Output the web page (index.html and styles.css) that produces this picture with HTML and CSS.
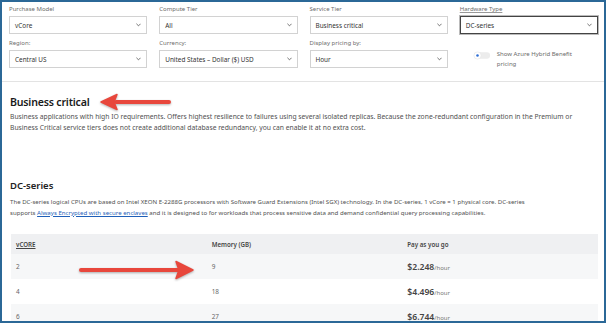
FILE: index.html
```html
<!DOCTYPE html>
<html lang="en">
<head>
    <meta charset="UTF-8">
    <meta name="viewport" content="width=device-width, initial-scale=1.0">
    <title>SQL Database Pricing</title>
    <link rel="stylesheet" href="styles.css">
</head>
<body>
    <div class="frame">
        <!-- Filters -->
        <div class="filters">
            <div class="field">
                <label>Purchase Model</label>
                <div class="select">vCore<svg viewBox="0 0 6 4"><path d="M0.5 0.5 L3 3 L5.5 0.5"/></svg></div>
            </div>
            <div class="field">
                <label>Compute Tier</label>
                <div class="select">All<svg viewBox="0 0 6 4"><path d="M0.5 0.5 L3 3 L5.5 0.5"/></svg></div>
            </div>
            <div class="field">
                <label>Service Tier</label>
                <div class="select">Business critical<svg viewBox="0 0 6 4"><path d="M0.5 0.5 L3 3 L5.5 0.5"/></svg></div>
            </div>
            <div class="field">
                <label class="focused">Hardware Type</label>
                <div class="select active">DC-series<svg viewBox="0 0 6 4"><path d="M0.5 0.5 L3 3 L5.5 0.5"/></svg></div>
            </div>
            <div class="field">
                <label>Region:</label>
                <div class="select">Central US<svg viewBox="0 0 6 4"><path d="M0.5 0.5 L3 3 L5.5 0.5"/></svg></div>
            </div>
            <div class="field">
                <label>Currency:</label>
                <div class="select">United States – Dollar ($) USD<svg viewBox="0 0 6 4"><path d="M0.5 0.5 L3 3 L5.5 0.5"/></svg></div>
            </div>
            <div class="field">
                <label>Display pricing by:</label>
                <div class="select">Hour<svg viewBox="0 0 6 4"><path d="M0.5 0.5 L3 3 L5.5 0.5"/></svg></div>
            </div>
            <div class="toggle-field">
                <svg class="toggle" viewBox="0 0 20 10">
                    <rect x="1" y="1.5" width="18" height="7" rx="3.5" fill="#ececec"/>
                    <circle cx="5" cy="5" r="4" fill="#fff" stroke="#e4e4e4" stroke-width="0.6"/>
                    <circle cx="5" cy="5" r="1.4" fill="#2f6fd6"/>
                </svg>
                <span>Show Azure Hybrid Benefit<br>pricing</span>
            </div>
        </div>

        <div class="divider"></div>

        <!-- Tier description -->
        <div class="section tier">
            <h2>Business critical</h2>
            <p>Business applications with high IO requirements. Offers highest resilience to failures using several isolated replicas. Because the zone-redundant configuration in the Premium or<br>Business Critical service tiers does not create additional database redundancy, you can enable it at no extra cost.</p>
        </div>

        <!-- Hardware description -->
        <div class="section hardware">
            <h3>DC-series</h3>
            <p>The DC-series logical CPUs are based on Intel XEON E-2288G processors with Software Guard Extensions (Intel SGX) technology. In the DC-series, 1 vCore = 1 physical core. DC-series<br>supports <a href="#">Always Encrypted with secure enclaves</a> and it is designed to for workloads that process sensitive data and demand confidential query processing capabilities.</p>

            <table class="pricing">
                <thead>
                    <tr>
                        <th><u>vCORE</u></th>
                        <th>Memory (GB)</th>
                        <th>Pay as you go</th>
                    </tr>
                </thead>
                <tbody>
                    <tr>
                        <td>2</td>
                        <td>9</td>
                        <td><span class="price">$2.248</span><span class="unit">/hour</span></td>
                    </tr>
                    <tr>
                        <td>4</td>
                        <td>18</td>
                        <td><span class="price">$4.496</span><span class="unit">/hour</span></td>
                    </tr>
                    <tr>
                        <td>6</td>
                        <td>27</td>
                        <td><span class="price">$6.744</span><span class="unit">/hour</span></td>
                    </tr>
                </tbody>
            </table>
        </div>

        <!-- Annotation arrows -->
        <svg class="arrow arrow-left" viewBox="0 0 72 20">
            <path d="M70 10 L17 10" stroke="#e8473c" stroke-width="4" stroke-linecap="round"/>
            <path d="M2 10 L18 2.5 L15 10 L18 17.5 Z" fill="#e8473c" stroke="#e8473c" stroke-width="1.5" stroke-linejoin="round"/>
        </svg>
        <svg class="arrow arrow-right" viewBox="0 0 116 22">
            <path d="M2 11 L100 11" stroke="#e8473c" stroke-width="4" stroke-linecap="round"/>
            <path d="M114 11 L97 2.5 L100 11 L97 19.5 Z" fill="#e8473c" stroke="#e8473c" stroke-width="1.5" stroke-linejoin="round"/>
        </svg>
    </div>
</body>
</html>
```

FILE: styles.css
```css
body {
    margin: 0;
    padding: 0;
    background-color: #fff;
    font-family: "Noto Sans", "Open Sans", sans-serif;
    color: #333;
}

.frame {
    position: relative;
    box-sizing: border-box;
    width: 606px;
    height: 323px;
    border: 2px solid #2b6897;
    background-color: #fff;
    overflow: hidden;
}

/* Filters */
.filters {
    display: grid;
    grid-template-columns: repeat(4, 1fr);
    column-gap: 12px;
    row-gap: 5px;
    padding: 3px 6px 0 7px;
}

.field label {
    display: block;
    font-size: 6px;
    line-height: 8px;
    color: #6b6b6b;
    margin-bottom: 3px;
}

    .field label.focused {
        text-decoration: underline;
        text-decoration-color: #999;
    }

.select {
    display: flex;
    align-items: center;
    justify-content: space-between;
    box-sizing: border-box;
    height: 18px;
    padding: 0 5px 0 5px;
    border: 1px solid #d2d2d2;
    background-color: #fff;
    font-size: 6.4px;
    color: #333;
    white-space: nowrap;
}

    .select svg {
        width: 5px;
        height: 4px;
        fill: none;
        stroke: #444;
        stroke-width: 0.9;
    }

    .select.active {
        border: 1px solid #444;
        outline: 1px solid #bbb;
    }

.toggle-field {
    display: flex;
    align-items: flex-start;
    gap: 6px;
    padding: 10px 0 0 13px;
    font-size: 6px;
    line-height: 10px;
    color: #6b6b6b;
}

.toggle {
    width: 18px;
    height: 9px;
    margin-top: 2px;
}

.divider {
    height: 1px;
    background-color: #e3e3e3;
    margin-top: 12px;
}

/* Sections */
.section {
    padding: 0 8px;
}

    .section h2 {
        font-size: 10.6px;
        font-weight: 600;
        letter-spacing: -0.2px;
        line-height: 13px;
        color: #1a1a1a;
        margin: 14px 0 2px 0;
    }

    .section h3 {
        font-size: 9.5px;
        font-weight: 600;
        line-height: 11px;
        color: #222;
        margin: 0 0 6px 0;
    }

    .section p {
        font-size: 6.1px;
        line-height: 10px;
        color: #505050;
        margin: 0;
        white-space: nowrap;
    }

.tier p {
    font-size: 6.75px;
    line-height: 11px;
}

.hardware {
    margin-top: 47px;
}

    .hardware p {
        line-height: 10.5px;
    }

    .hardware a {
        color: #1f5fb8;
        text-decoration: underline;
    }

/* Pricing table */
.pricing {
    width: 587px;
    margin-top: 16px;
    margin-left: 1px;
    border-collapse: collapse;
    table-layout: fixed;
}

    .pricing th {
        height: 20px;
        padding: 0 5px;
        text-align: left;
        font-size: 6.2px;
        font-weight: 600;
        color: #444;
        background-color: #eff0f2;
    }

    .pricing td {
        height: 25px;
        padding: 0 5px;
        font-size: 6.4px;
        color: #666;
    }

    .pricing tbody tr:nth-child(odd) {
        background-color: #f6f7f8;
    }

    .pricing .price {
        font-size: 8.6px;
        font-weight: 600;
        color: #444;
    }

    .pricing .unit {
        font-size: 6px;
        color: #777;
    }

/* Arrows */
.arrow {
    position: absolute;
    filter: drop-shadow(0.5px 1px 1px rgba(0, 0, 0, 0.3));
}

.arrow-left {
    left: 97px;
    top: 90px;
    width: 72px;
    height: 20px;
}

.arrow-right {
    left: 77px;
    top: 257px;
    width: 116px;
    height: 22px;
}
```
